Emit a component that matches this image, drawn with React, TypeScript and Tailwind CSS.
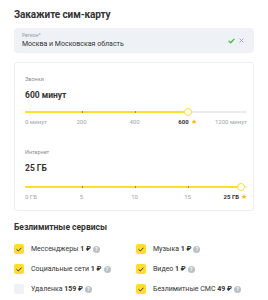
import * as React from "react";

type Tick = { label: string; bold?: boolean; star?: boolean };

function Slider({ value, ticks }: { value: number; ticks: Tick[] }) {
  // value: index of the tick the thumb sits on
  const pos = 4 + value * 53;
  return (
    <div className="w-[222px]">
      <div className="relative h-[10px]">
        <div className="absolute left-0 right-0 top-[4px] h-[2px] rounded-full bg-[#e9ebee]" />
        <div
          className="absolute left-0 top-[4px] h-[2px] rounded-full bg-[#ffdd2d]"
          style={{ width: pos }}
        />
        {[1, 2, 3].map((i) => (
          <div
            key={i}
            className="absolute top-[4px] h-[2px] w-[1px] bg-[#8d8d78]"
            style={{ left: 4 + i * 53 }}
          />
        ))}
        <div
          className="absolute top-[1px] h-[8px] w-[8px] -translate-x-1/2 rounded-full border-[1.5px] border-[#ffdd2d] bg-white"
          style={{ left: pos }}
        />
      </div>
      <div className="mt-[1px] grid h-[8px] grid-cols-[30px_53px_53px_53px_1fr] text-[6px] leading-[8px] text-[#a0a5ab]">
        {ticks.map((t, i) => (
          <div
            key={i}
            className={
              "flex items-center whitespace-nowrap " +
              (i === 0 ? "justify-start" : i === 4 ? "justify-end" : "justify-center")
            }
          >
            <span className={t.bold ? "font-bold text-[#333]" : ""}>{t.label}</span>
            {t.star && <span className="ml-[2px] text-[7px] text-[#ffb400]">★</span>}
          </div>
        ))}
      </div>
    </div>
  );
}

function Help() {
  return (
    <span className="ml-[2px] inline-flex h-[7px] w-[7px] items-center justify-center rounded-full bg-[#bcc1c7] text-[5px] font-bold leading-none text-white">
      ?
    </span>
  );
}

function Service({ name, price, checked }: { name: string; price: string; checked: boolean }) {
  return (
    <div className="flex h-[20px] items-center">
      <div
        className={
          "flex h-[10px] w-[10px] items-center justify-center rounded-[2px] " +
          (checked ? "bg-[#ffdd2d]" : "bg-[#eef1f6]")
        }
      >
        {checked && (
          <svg width="6" height="5" viewBox="0 0 6 5" fill="none">
            <path d="M0.8 2.6 L2.3 4 L5.2 1" stroke="#333" strokeWidth="1" strokeLinecap="round" strokeLinejoin="round" />
          </svg>
        )}
      </div>
      <span className="ml-[7px] whitespace-nowrap text-[7px] text-[#333]">
        {name} <span className="font-bold">{price}</span>
      </span>
      <Help />
    </div>
  );
}

export default function App() {
  return (
    <div className="h-[300px] w-[268px] overflow-hidden bg-white px-[14px] pt-[8px] font-['Roboto',sans-serif] text-[#333]">
      <h1 className="text-[10px] font-bold leading-[14px] tracking-[-0.1px]">Закажите сим-карту</h1>

      <div className="mt-[6px] flex h-[25px] items-center rounded-[4px] bg-[#eef2f7] pl-[8px] pr-[10px]">
        <div className="flex-1">
          <div className="text-[5px] leading-[7px] text-[#9299a2]">Регион*</div>
          <div className="text-[7px] leading-[10px] text-[#333]">Москва и Московская область</div>
        </div>
        <svg width="7" height="6" viewBox="0 0 7 6" fill="none">
          <path d="M1 3.2 L2.7 4.8 L6 1.2" stroke="#4fb848" strokeWidth="1.3" strokeLinecap="round" strokeLinejoin="round" />
        </svg>
        <svg className="ml-[4px]" width="5" height="5" viewBox="0 0 5 5" fill="none">
          <path d="M0.8 0.8 L4.2 4.2 M4.2 0.8 L0.8 4.2" stroke="#9aa0a6" strokeWidth="0.9" strokeLinecap="round" />
        </svg>
      </div>

      <div className="mt-[9px] rounded-[3px] border border-[#eceef1] px-[10px] pb-[9px] pt-[12px]">
        <div className="text-[5.5px] leading-[8px] text-[#8a9097]">Звонки</div>
        <div className="mt-[6px] text-[8.5px] font-bold leading-[12px]">600 минут</div>
        <div className="mt-[6px]">
          <Slider
            value={3}
            ticks={[
              { label: "0 минут" },
              { label: "200" },
              { label: "400" },
              { label: "600", bold: true, star: true },
              { label: "1200 минут" },
            ]}
          />
        </div>

        <div className="mt-[22px] text-[5.5px] leading-[8px] text-[#8a9097]">Интернет</div>
        <div className="mt-[6px] text-[8.5px] font-bold leading-[12px]">25 ГБ</div>
        <div className="mt-[8px]">
          <Slider
            value={4}
            ticks={[
              { label: "0 ГБ" },
              { label: "5" },
              { label: "10" },
              { label: "15" },
              { label: "25 ГБ", bold: true, star: true },
            ]}
          />
        </div>
      </div>

      <h2 className="mt-[10px] text-[8.5px] font-bold leading-[12px]">Безлимитные сервисы</h2>
      <div className="mt-[6px] grid grid-cols-[122px_1fr]">
        <Service name="Мессенджеры" price="1 ₽" checked />
        <Service name="Музыка" price="1 ₽" checked />
        <Service name="Социальные сети" price="1 ₽" checked />
        <Service name="Видео" price="1 ₽" checked />
        <Service name="Удаленка" price="159 ₽" checked={false} />
        <Service name="Безлимитные СМС" price="49 ₽" checked />
      </div>
    </div>
  );
}
